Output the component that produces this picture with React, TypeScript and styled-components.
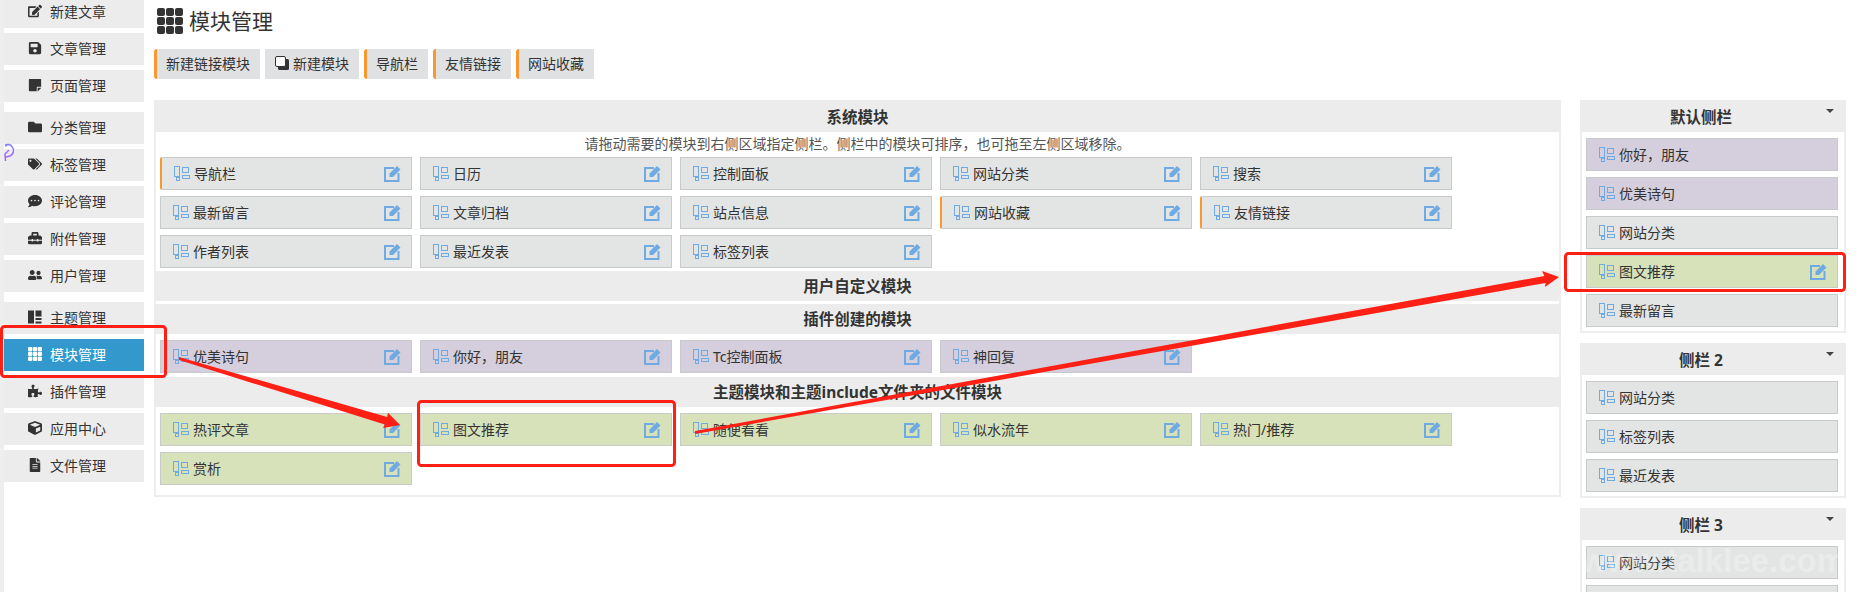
import React from "react";
import styled, { createGlobalStyle } from "styled-components";
import {
  FaEdit,
  FaSave,
  FaStickyNote,
  FaFolder,
  FaTags,
  FaCommentDots,
  FaToolbox,
  FaUserFriends,
  FaPuzzlePiece,
  FaCube,
  FaFileAlt,
} from "react-icons/fa";

const GlobalStyle = createGlobalStyle`
  html, body {
    margin: 0;
    padding: 0;
    height: 592px;
    overflow: hidden;
    background: #fff;
  }
  body {
    font-family: "Noto Sans", "Noto Sans CJK SC", sans-serif;
    font-size: 14px;
    color: #333;
  }
`;

const colors = {
  panel: "#ececec",
  orange: "#f8982f",
  blue: "#6fabe2",
  red: "#fe2015",
};

// full-width comma, kept apart so it never gets normalised to an ASCII one
const COMMA = "\uFF0C";

const Page = styled.div`
  position: relative;
  display: flex;
  width: 1864px;
  height: 592px;
  overflow: hidden;
`;

const Sidebar = styled.nav`
  flex: none;
  width: 140px;
  height: 596px;
  margin-top: -4px;
  border-left: 4px solid #eee;
  display: flex;
  flex-direction: column;
  gap: 10px;
`;

const MenuGroup = styled.div`
  display: flex;
  flex-direction: column;
  gap: 5px;
`;

const MenuItem = styled.div<{ $active?: boolean }>`
  height: 32px;
  box-sizing: border-box;
  display: flex;
  align-items: center;
  gap: 8px;
  padding: 0 0 2px 24px;
  background: ${(p) => (p.$active ? "#3399cc" : colors.panel)};
  color: ${(p) => (p.$active ? "#fff" : "#333")};
  svg {
    flex: none;
    width: 14px;
    height: 14px;
  }
`;

const Main = styled.main`
  flex: none;
  margin-left: 10px;
  width: 1692px;
`;

const TitleRow = styled.div`
  height: 49px;
  display: flex;
  align-items: center;
  padding: 0 0 7px 3px;
  box-sizing: border-box;
  gap: 6px;
  color: #333;
  svg {
    width: 26px;
    height: 26px;
  }
`;

const PageTitle = styled.h1`
  margin: 0;
  font-size: 21px;
  font-weight: 400;
  line-height: 28px;
  color: #333;
`;

const Toolbar = styled.div`
  display: flex;
  gap: 5px;
`;

const ToolButton = styled.button<{ $accent?: boolean }>`
  height: 30px;
  padding: 0 10px 2px ${(p) => (p.$accent ? "9px" : "10px")};
  display: flex;
  align-items: center;
  gap: 4px;
  border: 0;
  border-left: ${(p) => (p.$accent ? `3px solid ${colors.orange}` : "0")};
  border-radius: ${(p) => (p.$accent ? "3px 0 0 3px" : "0")};
  background: #e0e1e3;
  color: #333;
  font: inherit;
`;

const Columns = styled.div`
  margin-top: 21px;
  display: flex;
  align-items: flex-start;
  gap: 19px;
`;

const ModulePanel = styled.section`
  flex: none;
  width: 1407px;
  box-sizing: border-box;
  border: 2px solid #eee;
  border-top: 0;
`;

const SectionHead = styled.h2<{ $first?: boolean; $gap?: boolean }>`
  margin: ${(p) => (p.$gap ? "3px" : "0")} -2px 0;
  height: ${(p) => (p.$first ? "32px" : "30px")};
  box-sizing: border-box;
  padding-bottom: ${(p) => (p.$first ? "0" : "1px")};
  display: flex;
  align-items: center;
  justify-content: center;
  background: ${colors.panel};
  font-size: 15.5px;
  font-weight: 700;
  color: #333;
`;

const Hint = styled.p`
  margin: 0;
  height: 25px;
  line-height: 24px;
  text-align: center;
  font-size: 14px;
  color: #555;
`;

const ModuleGrid = styled.div<{ $top: number; $bottom: number }>`
  display: grid;
  grid-template-columns: repeat(5, 252px);
  gap: 6px 8px;
  padding: ${(p) => p.$top}px 0 ${(p) => p.$bottom}px 4px;
`;

const tones = {
  grey: "#e3e5e4",
  purple: "#d4cedd",
  green: "#d7e2bb",
};

type Tone = keyof typeof tones;

const ModuleCard = styled.div<{ $tone: Tone; $accent?: boolean }>`
  height: 33px;
  box-sizing: border-box;
  display: flex;
  align-items: center;
  gap: 4px;
  padding: 0 10px 0 12px;
  background: ${(p) => tones[p.$tone]};
  border: 1px solid #c9caca;
  border-left: ${(p) => (p.$accent ? `2px solid ${colors.orange}` : "1px solid #c9caca")};
  border-radius: ${(p) => (p.$accent ? "2px 0 0 2px" : "0")};
  color: #333;
`;

const ModuleName = styled.span`
  flex: 1;
  padding-bottom: 2px;
`;

const SideColumn = styled.aside`
  flex: none;
  width: 266px;
  display: flex;
  flex-direction: column;
  gap: 10px;
`;

const SidePanel = styled.section`
  box-sizing: border-box;
  border: 2px solid #eee;
  border-top: 0;
`;

const SideHead = styled.h3`
  position: relative;
  margin: 0 -2px;
  height: 32px;
  box-sizing: border-box;
  padding-right: 24px;
  display: flex;
  align-items: center;
  justify-content: center;
  background: ${colors.panel};
  font-size: 15.5px;
  font-weight: 700;
  color: #333;
`;

const Caret = styled.i`
  position: absolute;
  top: 9px;
  right: 12px;
  border: 4px solid transparent;
  border-bottom: 0;
  border-top: 4px solid #444;
`;

const SideList = styled.div`
  display: flex;
  flex-direction: column;
  gap: 6px;
  padding: 6px 6px 4px 4px;
`;

const Annotations = styled.svg`
  position: absolute;
  inset: 0;
  pointer-events: none;
`;

const Watermark = styled.div`
  position: absolute;
  left: 1570px;
  top: 541px;
  width: 276px;
  overflow: hidden;
  white-space: nowrap;
  direction: rtl;
  font-family: "Liberation Sans", sans-serif;
  font-size: 33px;
  font-weight: 700;
  line-height: 40px;
  color: rgba(255, 255, 255, 0.28);
  pointer-events: none;
`;

function ModuleGlyph() {
  return (
    <svg width="16" height="15" viewBox="0 0 16 15" fill="none" stroke={colors.blue} strokeWidth="1" style={{ flex: "none" }}>
      <rect x="0.5" y="0.5" width="5" height="10" />
      <rect x="2.5" y="11.5" width="3" height="3" />
      <rect x="8.5" y="1.5" width="6" height="5" />
      <rect x="8.5" y="9.5" width="7" height="3" />
    </svg>
  );
}

function EditGlyph() {
  return (
    <svg width="17" height="17" viewBox="0 0 17 17" style={{ flex: "none" }}>
      <path d="M10 3H1v13h13.5V8" fill="none" stroke={colors.blue} strokeWidth="2" />
      <path d="M5.5 8.5 13 1 16.5 4.5 9 12H5.5z" fill={colors.blue} />
    </svg>
  );
}

function GridGlyph() {
  const cells = [0, 9, 18];
  return (
    <svg viewBox="0 0 26 26" fill="currentColor">
      {cells.map((y) =>
        cells.map((x) => <rect key={`${x}-${y}`} x={x} y={y} width="8" height="8" rx="2" />)
      )}
    </svg>
  );
}

function LayoutGlyph() {
  return (
    <svg viewBox="0 0 14 14" fill="#333">
      <rect x="0" y="0.5" width="6" height="13" />
      <rect x="7.5" y="0.5" width="6" height="6" />
      <rect x="7.5" y="8" width="6" height="2" />
      <rect x="7.5" y="11.5" width="6" height="2" />
    </svg>
  );
}

function CloneGlyph() {
  return (
    <svg width="14" height="14" viewBox="0 0 14 14">
      <rect x="3" y="3" width="11" height="11" rx="1.5" fill="#333" />
      <rect x="0.5" y="0.5" width="10" height="10" rx="1.5" fill="#fff" stroke="#333" />
    </svg>
  );
}

const menuGroups = [
  [
    { label: "新建文章", icon: <FaEdit /> },
    { label: "文章管理", icon: <FaSave /> },
    { label: "页面管理", icon: <FaStickyNote /> },
  ],
  [
    { label: "分类管理", icon: <FaFolder /> },
    { label: "标签管理", icon: <FaTags /> },
    { label: "评论管理", icon: <FaCommentDots /> },
    { label: "附件管理", icon: <FaToolbox /> },
    { label: "用户管理", icon: <FaUserFriends /> },
  ],
  [
    { label: "主题管理", icon: <LayoutGlyph /> },
    { label: "模块管理", icon: <GridGlyph />, active: true },
    { label: "插件管理", icon: <FaPuzzlePiece /> },
    { label: "应用中心", icon: <FaCube /> },
    { label: "文件管理", icon: <FaFileAlt /> },
  ],
];

interface ModuleProps {
  name: string;
  tone?: Tone;
  accent?: boolean;
  edit?: boolean;
}

function Module({ name, tone = "grey", accent, edit = true }: ModuleProps) {
  return (
    <ModuleCard $tone={tone} $accent={accent}>
      <ModuleGlyph />
      <ModuleName>{name}</ModuleName>
      {edit && <EditGlyph />}
    </ModuleCard>
  );
}

const systemModules: ModuleProps[] = [
  { name: "导航栏", accent: true },
  { name: "日历" },
  { name: "控制面板" },
  { name: "网站分类" },
  { name: "搜索" },
  { name: "最新留言" },
  { name: "文章归档" },
  { name: "站点信息" },
  { name: "网站收藏", accent: true },
  { name: "友情链接", accent: true },
  { name: "作者列表" },
  { name: "最近发表" },
  { name: "标签列表" },
];

const pluginModules = ["优美诗句", `你好${COMMA}朋友`, "Tc控制面板", "神回复"];
const themeModules = ["热评文章", "图文推荐", "随便看看", "似水流年", "热门/推荐", "赏析"];

const sidePanels: { title: string; items: ModuleProps[] }[] = [
  {
    title: "默认侧栏",
    items: [
      { name: `你好${COMMA}朋友`, tone: "purple", edit: false },
      { name: "优美诗句", tone: "purple", edit: false },
      { name: "网站分类", edit: false },
      { name: "图文推荐", tone: "green" },
      { name: "最新留言", edit: false },
    ],
  },
  {
    title: "侧栏 2",
    items: [
      { name: "网站分类", edit: false },
      { name: "标签列表", edit: false },
      { name: "最近发表", edit: false },
    ],
  },
  {
    title: "侧栏 3",
    items: [
      { name: "网站分类", edit: false },
      { name: "", edit: false },
    ],
  },
];

export default function App() {
  return (
    <Page>
      <GlobalStyle />
      <Sidebar>
        {menuGroups.map((group, i) => (
          <MenuGroup key={i}>
            {group.map((item) => (
              <MenuItem key={item.label} $active={item.active}>
                {item.icon}
                {item.label}
              </MenuItem>
            ))}
          </MenuGroup>
        ))}
      </Sidebar>

      <Main>
        <TitleRow>
          <GridGlyph />
          <PageTitle>模块管理</PageTitle>
        </TitleRow>
        <Toolbar>
          <ToolButton $accent>新建链接模块</ToolButton>
          <ToolButton>
            <CloneGlyph />
            新建模块
          </ToolButton>
          <ToolButton $accent>导航栏</ToolButton>
          <ToolButton $accent>友情链接</ToolButton>
          <ToolButton $accent>网站收藏</ToolButton>
        </Toolbar>

        <Columns>
          <ModulePanel>
            <SectionHead $first>系统模块</SectionHead>
            <Hint>{`请拖动需要的模块到右侧区域指定侧栏。侧栏中的模块可排序${COMMA}也可拖至左侧区域移除。`}</Hint>
            <ModuleGrid $top={0} $bottom={3}>
              {systemModules.map((m) => (
                <Module key={m.name} {...m} />
              ))}
            </ModuleGrid>
            <SectionHead>用户自定义模块</SectionHead>
            <SectionHead $gap>插件创建的模块</SectionHead>
            <ModuleGrid $top={6} $bottom={4}>
              {pluginModules.map((name) => (
                <Module key={name} name={name} tone="purple" />
              ))}
            </ModuleGrid>
            <SectionHead>主题模块和主题include文件夹的文件模块</SectionHead>
            <ModuleGrid $top={6} $bottom={10}>
              {themeModules.map((name) => (
                <Module key={name} name={name} tone="green" />
              ))}
            </ModuleGrid>
          </ModulePanel>

          <SideColumn>
            {sidePanels.map((panel) => (
              <SidePanel key={panel.title}>
                <SideHead>
                  {panel.title}
                  <Caret />
                </SideHead>
                <SideList>
                  {panel.items.map((m, i) => (
                    <Module key={i} {...m} />
                  ))}
                </SideList>
              </SidePanel>
            ))}
          </SideColumn>
        </Columns>
      </Main>

      <Watermark>www.talklee.com</Watermark>

      {/* hand-drawn red callouts on top of the screenshot */}
      <Annotations width="1864" height="592" viewBox="0 0 1864 592">
        <defs>
          <linearGradient id="swirl" gradientUnits="userSpaceOnUse" x1="9" y1="142" x2="6" y2="162">
            <stop offset="0" stopColor="#7d8cff" />
            <stop offset="1" stopColor="#b05cf5" />
          </linearGradient>
        </defs>
        <path
          d="M5 145a6 6 0 1 1 5 11l-4 1M12 147a3.5 3.5 0 0 0-6.500-.5M9 150l-4 4 .5 7"
          fill="none"
          stroke="url(#swirl)"
          strokeWidth="1.5"
        />
        <g fill="none" stroke={colors.red} strokeWidth="3">
          <rect x="1.5" y="326.5" width="164" height="50" rx="3" />
          <rect x="418.5" y="401.5" width="256" height="64" rx="3" />
          <rect x="1565.5" y="253.5" width="279" height="37" rx="3" />
        </g>
        <g fill={colors.red}>
          <polygon points="179,357 387.2,417 388,412.7 400,425 383,428 384.8,424.6 179,360" />
          <polygon points="695,431 1544.4,276 1542,271 1559,277 1545,287 1545.6,283 695,434" />
        </g>
      </Annotations>
    </Page>
  );
}
